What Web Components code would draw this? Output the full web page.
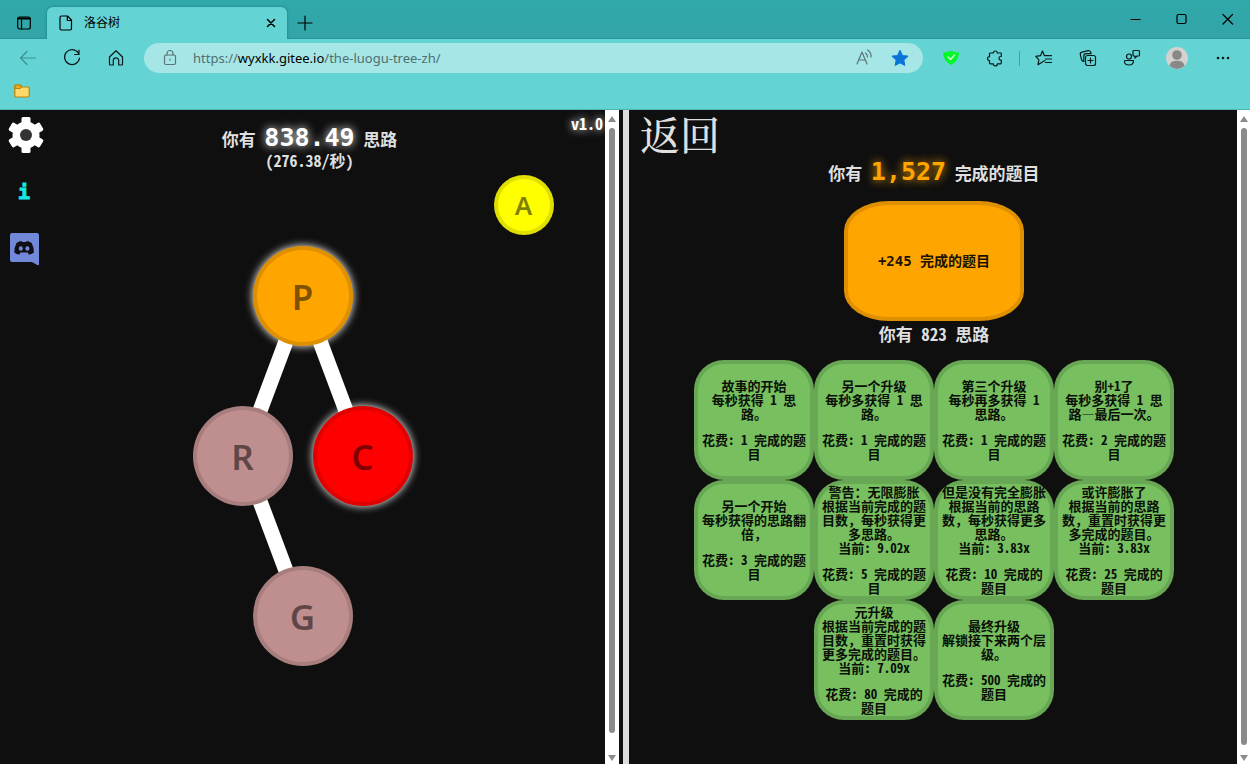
<!DOCTYPE html>
<html lang="zh">
<head>
<meta charset="utf-8">
<title>洛谷树</title>
<style>
html,body{margin:0;height:100%;background:#0f0f0f}
body{font-family:"Noto Sans Mono CJK SC","Liberation Mono","Noto Sans CJK SC",monospace}
</style>
</head>
<body>
<app-window></app-window>
<script>
const define = (name, html, setup) => customElements.define(name, class extends HTMLElement {
  constructor() {
    super();
    const t = document.createElement('template');
    t.innerHTML = '<style>*{box-sizing:border-box}button{font:inherit;color:inherit;background:none;border:0;padding:0;margin:0;cursor:pointer}svg{display:block}</style>' + html;
    this.attachShadow({mode: 'open'}).append(t.content.cloneNode(true));
  }
  connectedCallback() { if (setup) setup(this, this.shadowRoot); }
});

const glyphs = {
  tabs: '<rect x="1.7" y="2" width="12.6" height="12" rx="2"/><path d="M2 4h12M2 3h12M5.5 5v9"/>',
  page: '<path d="M3.5 1h6l4 4v8.500q0 1.500-1.500 1.500h-8.500q-1.500 0-1.500-1.500v-11q0-1.500 1.500-1.500zM9.300 1v4.500h4.200"/>',
  close: '<path d="M4.500 4.500l7 7M11.500 4.500l-7 7" stroke-width="1.500"/>',
  plus: '<path d="M8 1v14M1 8h14"/>',
  back: '<path d="M15.500 8h-15M7 1.500L.5 8 7 14.500"/>',
  reload: '<path d="M14.500 3.200A7.500 7.500 0 1 0 15.500 8M15 0v4.500h-4.500"/>',
  home: '<path d="M1.500 7L8 .8 14.500 7v7.200q0 .8-.8.800h-3v-4.500a2.700 2.700 0 0 0-5.400 0V15h-3q-.8 0-.8-.8z"/>',
  lock: '<rect x="2.500" y="5" width="11" height="9.500" rx="1.500"/><path d="M5 5V3.500a3 3 0 0 1 6 0V5M8 9v1.300"/>',
  read: '<path d="M1 14L6 2l5 12M2.800 10h6.400M9.500 3q2 1.500 2 4M11.500 0q4 2.500 3.500 7"/>',
  star: '<path fill="currentColor" d="M8 .6l2.300 4.900 5.300.7-3.900 3.700 1 5.300L8 12.600l-4.700 2.600 1-5.300L.4 6.200l5.300-.7z"/>',
  shield: '<path fill="currentColor" stroke="none" d="M0 2.500Q5 2.500 8 .5q3 2 8 2 0 8-8 12.500Q0 10.500 0 2.500z"/><path stroke="#cfffd0" stroke-width="1.600" d="M5 7l2.500 2.500L11.500 5"/>',
  puzzle: '<path d="M3.300 3h3a2 2 0 0 1 4 0h3.200q.8 0 .8.800v2.700h-.5a1.800 1.800 0 0 0 0 3.600h.5v3q0 .8-.8.800h-3.200a2 2 0 0 1-4 0h-3q-.8 0-.8-.8v-2.400a2 2 0 1 1 0-4V3.800q0-.8.800-.8z"/>',
  favs: '<path d="M9 10.500l-3 1.700-4 2.500.9-4.900L-.2 6.400l4.700-.7L6.500 1l2 4.700h7M9.500 9h6M9.500 12.500h6"/>',
  collect: '<rect x="5.500" y="5.500" width="10" height="10" rx="2"/><path d="M10.500 8v5M8 10.500h5M3.800 11.500Q2 11.300 1.500 9.500L.3 4.600Q0 2.700 2 2.200L8 .6q2-.4 2.700 1.500l.4 1.400M3.800 11.500V6q0-2.300 2.500-2.300H11"/>',
  share: '<circle cx="5" cy="6.500" r="2.500"/><path d="M1 10.500h8.500q0 4.500-4.500 4.500t-4.500-3.500q0-1 .5-1zM9 1.500q0-1 1-1h4.500q1 0 1 1V5q0 1-1 1H13l-2 2V6h-1q-1 0-1-1z"/>',
  more: '<g fill="currentColor" stroke="none"><circle cx="3" cy="8" r="1.300"/><circle cx="8" cy="8" r="1.300"/><circle cx="13" cy="8" r="1.300"/></g>',
  min: '<path d="M4 8.500h9"/>',
  max: '<rect x="4" y="3.500" width="9" height="9" rx="1.500"/>',
  x: '<path d="M4 3.500l9.500 9.500M13.500 3.500L4 13"/>',
  folder: '<path fill="#ffd86b" stroke="#b8860b" d="M.8 3.500Q.8 2 2 2h4l2 2h6q1.200 0 1.200 1.200v7.600q0 1.200-1.200 1.200H2Q.8 14 .8 12.800z"/><path fill="#e8b020" stroke="#b8860b" d="M1 5.500V3q0-1 1-1h4l1.500 1.700L6 5.500z"/>'
};

define('line-icon', `<style>:host{display:block;width:16px;height:16px}svg{width:16px;height:16px;overflow:visible}</style>
<svg viewBox="0 0 16 16" fill="none" stroke="currentColor" stroke-width="1.200" stroke-linecap="round" stroke-linejoin="round"></svg>`,
(el, r) => { r.querySelector('svg').innerHTML = glyphs[el.getAttribute('name')]; });

define('tab-strip', `<style>
:host{display:flex;height:39px;padding-top:7px;background:linear-gradient(#2fa9aa,#33a4a7);color:#000;border-bottom:1px solid #2a9598}
.lead{width:47px;display:grid;place-items:center}
.tab{width:240px;height:32px;background:#63d3d3;border-radius:6px 6px 0 0;display:flex;align-items:center;padding:0 8px 0 11px;gap:10px;font:12px "Noto Sans CJK SC",sans-serif;box-shadow:0 0 3px #1a7c80}
.tab span{flex:1;line-height:16px;padding-bottom:2px}
.add{width:36px;display:grid;place-items:center}
.win{margin-left:auto;display:flex}
.win button{width:46px;display:grid;place-items:center;padding-bottom:7px}
</style>
<button class="lead" aria-label="标签操作"><line-icon name="tabs"></line-icon></button>
<div class="tab"><line-icon name="page"></line-icon><span>洛谷树</span><button aria-label="关闭标签"><line-icon name="close"></line-icon></button></div>
<button class="add" aria-label="新建标签"><line-icon name="plus"></line-icon></button>
<div class="win"><button aria-label="最小化"><line-icon name="min"></line-icon></button><button aria-label="最大化"><line-icon name="max"></line-icon></button><button aria-label="关闭"><line-icon name="x"></line-icon></button></div>`);

define('tool-bar', `<style>
:host{display:flex;align-items:center;height:38px;background:#63d3d3;color:#0a1a1a}
button{display:grid;place-items:center}
.nav{display:flex;padding-left:6px}.nav button{width:44px}.nav button:first-child{color:#3a8f92}
.addr{flex:1;min-width:0;height:30px;margin-left:6px;border-radius:15px;background:#a6e6e6;display:flex;align-items:center;padding:0 15px 0 18px;color:#5a7576}
.url{flex:1;margin-left:15px;font:13px "Noto Sans",sans-serif;white-space:nowrap;color:#4f6e70;text-decoration:none}
.url b{font-weight:400;color:#000}
.addr button+button{margin-left:20px;color:#0b74d8}
.ext{display:flex;align-items:center;padding:0 4px 0 6px}
.ext button{width:44px}.ext button.w{width:46px}
.ok{color:#00fa28}
i{width:1px;height:15px;background:#3fa3a5;margin:0 2px}
.me{width:22px;height:22px}
</style>
<div class="nav"><button aria-label="后退"><line-icon name="back"></line-icon></button><button aria-label="刷新"><line-icon name="reload"></line-icon></button><button aria-label="主页"><line-icon name="home"></line-icon></button></div>
<div class="addr"><line-icon name="lock"></line-icon><a class="url" href="#">https://<b>wyxkk.gitee.io</b>/the-luogu-tree-zh/</a><button aria-label="朗读"><line-icon name="read"></line-icon></button><button aria-label="收藏"><line-icon name="star"></line-icon></button></div>
<div class="ext"><button class="ok" aria-label="防护"><line-icon name="shield"></line-icon></button><button aria-label="扩展"><line-icon name="puzzle"></line-icon></button><i></i><button aria-label="收藏夹"><line-icon name="favs"></line-icon></button><button aria-label="集锦"><line-icon name="collect"></line-icon></button><button aria-label="共享"><line-icon name="share"></line-icon></button><button class="w" aria-label="用户"><svg class="me" viewBox="0 0 22 22"><circle cx="11" cy="11" r="11" fill="#d4d2d0"/><circle cx="11" cy="8" r="4.800" fill="#8a8886"/><path d="M3.500 19Q4 13.800 11 13.800T18.500 19Q11 25 3.500 19z" fill="#8a8886"/></svg></button><button class="w" aria-label="更多"><line-icon name="more"></line-icon></button></div>`);

define('book-marks', `<style>:host{display:flex;align-items:center;height:33px;padding:0 14px 4px;background:#63d3d3;border-bottom:1px solid #4fb4b4}</style>
<button aria-label="书签文件夹"><line-icon name="folder"></line-icon></button>`);

define('scroll-rail', `<style>
:host{display:flex;flex-direction:column;align-items:center;justify-content:space-between;background:#fff;padding:6px 0 3px;flex:none;gap:3px}
.thumb{width:6px;flex:1;border-radius:3px;background:#8b8b8b;margin-top:3px}
.rest{height:16px}
svg{width:8px;height:6px}
</style>
<svg viewBox="0 0 8 6"><path d="M4 0l4 6H0z" fill="#8b8b8b"/></svg><div class="thumb"></div><div class="rest"></div><svg viewBox="0 0 8 6"><path d="M4 6l4-6H0z" fill="#8b8b8b"/></svg>`,
(el, r) => { r.querySelector('.rest').style.height = (el.getAttribute('rest') || 0) + 'px'; });

define('point-count', `<style>
:host{display:block;text-align:center;font-size:17px;line-height:24px;color:#dfdfdf;font-weight:700}
b{font:bold 25px/24px "DejaVu Sans Mono",monospace;color:var(--tone,#fff);text-shadow:0 0 10px var(--tone,#fff)}
</style>你有 <b><slot></slot></b> <slot name="unit"></slot>`);

define('tree-node', `<style>
:host{position:absolute;width:var(--d,100px);height:var(--d,100px);transform:translate(-50%,-50%)}
button{width:100%;height:100%;border-radius:50%;background:var(--fill);border:4px solid rgba(0,0,0,.125);color:rgba(0,0,0,.5);font:600 var(--s,35px)/1 "Noto Sans",sans-serif}
:host([lit]) button{box-shadow:0 0 8px #fff}
</style><button><slot></slot></button>`);

define('side-links', `<style>
:host{position:absolute;left:8px;top:7px;display:flex;flex-direction:column;align-items:flex-start}
button,a{display:block;text-decoration:none}
.info{width:32px;height:20px;margin:29px 0 27px;color:#18e8e4;font:bold 20px/20px "DejaVu Sans Mono",monospace;text-align:center;-webkit-text-stroke:1px #18e8e4}
</style>
<button aria-label="设置"><svg width="36" height="36" viewBox="0 0 36 36"><g fill="#fff"><circle cx="18" cy="18" r="13.500"/><rect x="13.500" y="0" width="9" height="36" rx="1.500"/><rect x="13.500" y="0" width="9" height="36" rx="1.500" transform="rotate(60 18 18)"/><rect x="13.500" y="0" width="9" height="36" rx="1.500" transform="rotate(120 18 18)"/></g><circle cx="18" cy="18" r="6" fill="#333"/></svg></button>
<button class="info">i</button>
<a href="#" aria-label="Discord"><svg width="32" height="36" viewBox="0 0 32 36"><path fill="#7289da" d="M4 4h25q2 0 2 2v31l-7-4H4q-2 0-2-2V6q0-2 2-2z"/><path fill="#0f0f14" d="M8.500 14q3-2 5-2l.6 1h4l.6-1q2 0 5 2 2.500 5 2.200 9.500-2 2-5 2l-1.300-2h-7l-1.300 2q-3 0-5-2Q6 19 8.500 14z"/><ellipse cx="12.800" cy="19.500" rx="2" ry="2.200" fill="#7289da"/><ellipse cx="19.400" cy="19.500" rx="2" ry="2.200" fill="#7289da"/></svg></a>`);

define('tree-pane', `<style>
:host{display:flex;flex:none;width:calc(50% - 6px);min-height:0}
main{position:relative;flex:1;min-width:0;color:#dfdfdf;font-weight:700}
header{padding-top:16px;margin-right:-14px}
.rate{text-align:center;font-size:16px;line-height:18px}
.ver{position:absolute;right:2px;top:2px;font-size:16px;line-height:22px;color:#fff;text-shadow:0 0 8px #fff}
.links{position:absolute;left:50%;top:0;width:400px;margin-left:-200px;height:600px;overflow:visible}
scroll-rail{width:14px}
</style>
<main>
<header><point-count>838.49<span slot="unit">思路</span></point-count><div class="rate">(276.38/秒)</div></header>
<div class="ver">v1.0</div>
<side-links></side-links>
<svg class="links" viewBox="0 0 400 600"><path d="M200 186L140 346L200 506M200 186L260 346" fill="none" stroke="#fff" stroke-width="15"/></svg>
<tree-node style="--d:60px;--s:26px;--fill:#ff0;left:calc(50% + 221px);top:95px">A</tree-node>
<tree-node lit style="--fill:#ffa500;left:50%;top:186px">P</tree-node>
<tree-node style="--fill:#bf8f8f;left:calc(50% - 60px);top:346px">R</tree-node>
<tree-node lit style="--fill:#f00;left:calc(50% + 60px);top:346px">C</tree-node>
<tree-node style="--fill:#bf8f8f;left:50%;top:506px">G</tree-node>
</main><scroll-rail rest="16"></scroll-rail>`);

define('upgrade-tile', `<style>
:host{display:block;width:120px;height:120px}
button{width:120px;height:120px;border:4px solid rgba(0,0,0,.125);border-radius:30px;background:#77bf5f;color:#0a0f08;font-size:13px;line-height:14px;font-weight:700;display:flex;flex-direction:column;align-items:center;justify-content:center;gap:12px;padding:0 3px}
div{width:106px;overflow-wrap:anywhere;white-space:pre-line}
</style><button><div><slot></slot></div><div><slot name="cost"></slot></div></button>`);

const rows = [
  [['故事的开始','每秒获得 1 思路。','',1],['另一个升级','每秒多获得 1 思路。','',1],['第三个升级','每秒再多获得 1 思路。','',1],['别+1了','每秒多获得 1 思路—最后一次。','',2]],
  [['另一个开始','每秒获得的思路翻倍，','',3],['警告：无限膨胀','根据当前完成的题目数，每秒获得更多思路。','9.02x',5],['但是没有完全膨胀','根据当前的思路数，每秒获得更多思路。','3.83x',10],['或许膨胀了','根据当前的思路数，重置时获得更多完成的题目。','3.83x',25]],
  [['元升级','根据当前完成的题目数，重置时获得更多完成的题目。','7.09x',80],['最终升级','解锁接下来两个层级。','',500]]
];

define('layer-pane', `<style>
:host{display:flex;flex:1;min-width:0;margin-left:4px;border-left:6px solid #dcdcdc}
main{flex:1;min-width:0;display:flex;flex-direction:column;align-items:center;padding-left:2px;color:#dfdfdf;font-weight:700}
.back{align-self:flex-start;margin-left:9px;height:50px;padding-bottom:4px;font:500 40px/46px "Noto Serif CJK SC","Noto Sans CJK SC",serif}
point-count{--tone:#ffa500}
.reset{width:180px;height:120px;margin-top:16px;border:4px solid rgba(0,0,0,.125);border-radius:25%;background:#ffa500;color:#1c1200;font:bold 14px/20px "DejaVu Sans Mono","Noto Sans CJK SC",monospace}
.own{font-size:17px;line-height:26px;margin-bottom:13px}
.row{display:flex;justify-content:center}
scroll-rail{width:13px}
</style>
<main><button class="back">返回</button>
<point-count>1,527<span slot="unit">完成的题目</span></point-count>
<button class="reset">+245 完成的题目</button>
<div class="own">你有 823 思路</div>
<div class="grid"></div></main><scroll-rail rest="4"></scroll-rail>`,
(el, r) => {
  r.querySelector('.grid').innerHTML = rows.map(row => '<div class="row">' + row.map(([name, text, now, cost]) =>
    `<upgrade-tile>${name}\n${text}${now ? `\n当前: ${now}` : ''}<span slot="cost">花费: ${cost} 完成的题目</span></upgrade-tile>`).join('') + '</div>').join('');
});

define('app-window', `<style>
:host{display:flex;flex-direction:column;min-height:100vh}
.body{flex:1;display:flex;background:#0f0f0f}
</style><tab-strip></tab-strip><tool-bar></tool-bar><book-marks></book-marks><div class="body"><tree-pane></tree-pane><layer-pane></layer-pane></div>`);
</script>
</body>
</html>
